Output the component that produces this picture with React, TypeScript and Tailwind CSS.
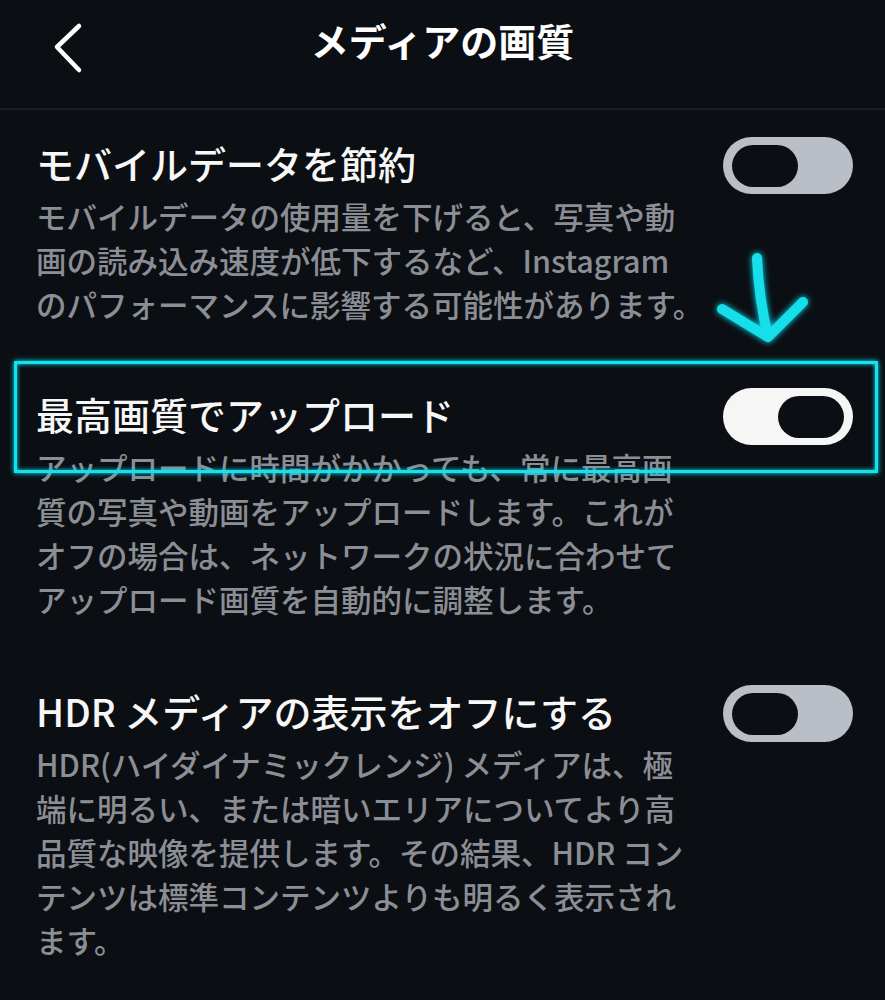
type ToggleProps = { on?: boolean };

const Toggle = ({ on = false }: ToggleProps) => {
  return (
    <div
      className={
        on
          ? "flex h-[57px] w-[130px] shrink-0 items-center justify-end rounded-full bg-[#f6f6f6] pr-[9px]"
          : "flex h-[57px] w-[130px] shrink-0 items-center justify-start rounded-full bg-[#babec7] pl-[9px]"
      }
    >
      <div className="h-[42px] w-[66px] rounded-full bg-[#0b0f13]" />
    </div>
  );
};

type SectionProps = {
  title: string;
  lines: string[];
  on?: boolean;
  className?: string;
};

const Section = ({ title, lines, on, className }: SectionProps) => {
  return (
    <section className={className}>
      <div className="flex h-[57px] items-center justify-between">
        <h2 className="whitespace-nowrap pb-[6px] text-[38px] font-medium leading-[51px] text-[#f7f7f7]">
          {title}
        </h2>
        <Toggle on={on} />
      </div>
      <div className="text-[30.5px] font-medium leading-[44px] text-[#8b8e95]">
        {lines.map((line) => (
          <p key={line} className="whitespace-nowrap">
            {line}
          </p>
        ))}
      </div>
    </section>
  );
};

const App = () => {
  return (
    <div className="relative min-h-[1000px] w-[885px] overflow-hidden bg-[#0b0f13] font-['Noto_Sans_CJK_JP','Noto_Sans',sans-serif]">
      {/* header */}
      <header className="relative flex h-[108px] items-start justify-center pt-[15px]">
        <button className="absolute left-[46px] top-[18px] p-1 text-white">
          <svg width="34" height="52" viewBox="0 0 34 52" fill="none">
            <path
              d="M29 4 L7 25 L29 48"
              stroke="currentColor"
              strokeWidth="4.5"
              strokeLinecap="round"
              strokeLinejoin="round"
            />
          </svg>
        </button>
        <h1 className="text-[38px] font-bold leading-[50px] text-white">メディアの画質</h1>
      </header>
      <div className="h-[2px] bg-[#1a1f24]" />

      <main className="pl-[36px] pr-[32px] pt-[27px]">
        <Section
          title="モバイルデータを節約"
          lines={[
            "モバイルデータの使用量を下げると、写真や動",
            "画の読み込み速度が低下するなど、Instagram",
            "のパフォーマンスに影響する可能性があります。",
          ]}
        />
        <Section
          className="mt-[62px]"
          title="最高画質でアップロード"
          on
          lines={[
            "アップロードに時間がかかっても、常に最高画",
            "質の写真や動画をアップロードします。これが",
            "オフの場合は、ネットワークの状況に合わせて",
            "アップロード画質を自動的に調整します。",
          ]}
        />
        <Section
          className="mt-[64px]"
          title="HDR メディアの表示をオフにする"
          lines={[
            "HDR(ハイダイナミックレンジ) メディアは、極",
            "端に明るい、または暗いエリアについてより高",
            "品質な映像を提供します。その結果、HDR コン",
            "テンツは標準コンテンツよりも明るく表示され",
            "ます。",
          ]}
        />
      </main>

      {/* cyan annotation */}
      <div className="pointer-events-none absolute left-[14px] top-[361px] h-[112px] w-[864px] border-[3px] border-[#12e3ec] shadow-[0_0_5px_#00e5ff,inset_0_0_4px_#00e5ff]" />
      <svg
        className="pointer-events-none absolute left-[700px] top-[240px] drop-shadow-[0_0_3px_#00e5ff]"
        width="130"
        height="120"
        viewBox="0 0 130 120"
        fill="none"
      >
        <path
          d="M57 18 Q59 60 68 96"
          stroke="#16dfe9"
          strokeWidth="10"
          strokeLinecap="round"
        />
        <path
          d="M22 69 L68 97 L103 62"
          stroke="#16dfe9"
          strokeWidth="10"
          strokeLinecap="round"
          strokeLinejoin="round"
        />
      </svg>
    </div>
  );
};

export default App;
